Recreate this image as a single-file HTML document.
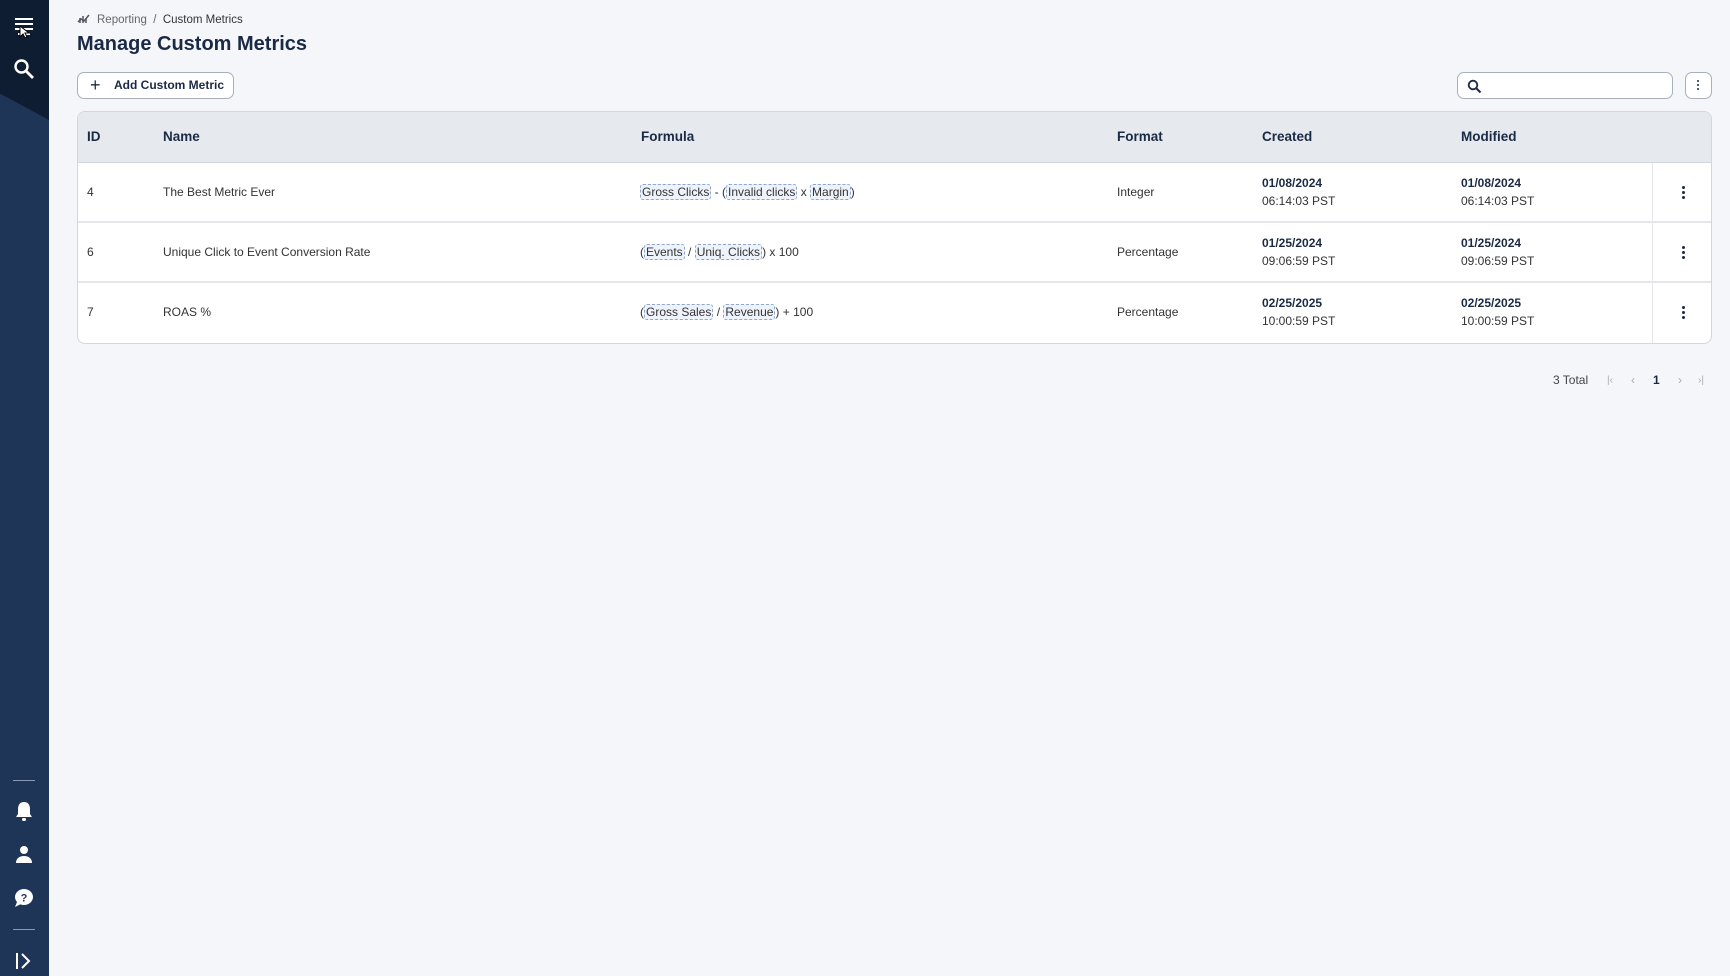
<!DOCTYPE html>
<html><head><meta charset="utf-8"><style>
*{box-sizing:border-box;margin:0;padding:0}
body{width:1730px;height:976px;background:#f5f6fa;font-family:"Liberation Sans",sans-serif;color:#333;position:relative;overflow:hidden}
.sb{position:absolute;left:0;top:0;width:49px;height:976px;background:#1f3558}
.sb .top{position:absolute;left:0;top:0;width:49px;height:120px;background:#0f1d33;clip-path:polygon(0 0,100% 0,100% 100%,0 78%)}
.ic{position:absolute;left:12px}
.a{position:absolute}
.bc{left:77px;top:12px;font-size:11.5px;color:#666}
.bc b{font-weight:normal;color:#333}
h1{position:absolute;left:77px;top:33px;font-size:20px;color:#1b2a44;font-weight:bold}
.btn{left:77px;top:72px;width:157px;height:27px;border:1px solid #a8b0bc;border-radius:7px;background:#fff;font-size:12px;font-weight:bold;color:#1b2a44;line-height:25px;padding-left:36px}
.btn span{position:absolute;left:12px;top:0;font-size:18px;font-weight:normal}
.srch{left:1457px;top:72px;width:216px;height:27px;border:1px solid #a8b0bc;border-radius:7px;background:#fff}
.keb{left:1685px;top:72px;width:27px;height:27px;border:1px solid #a8b0bc;border-radius:7px;background:#fff}
.tbl{left:77px;top:111px;width:1635px;height:233px;border:1px solid #d3d7dd;border-radius:8px;background:#fff;overflow:hidden}
.hd{position:absolute;left:0;top:0;width:100%;height:51px;background:#e6e9ed;border-bottom:1px solid #d3d7dd}
.t{position:absolute;font-size:12px;color:#333;white-space:nowrap}
.h{font-size:13.5px;font-weight:bold;color:#1b2a44}
.row{position:absolute;left:0;width:100%;height:60px;border-bottom:2px solid #e4e6ea}
.dv{position:absolute;left:1574px;top:51px;width:1px;height:182px;background:#e4e6ea}
.chip{border:1px dashed #8fa7cf;background:#eef3fb;border-radius:3px;padding:0 1px}
.bo{font-weight:bold;color:#1b2a44}
.dots{position:absolute;width:3px}
.dots i{display:block;width:3px;height:3px;border-radius:50%;background:#1b2a44;margin-bottom:2px}
.pg{font-size:12px;color:#444;top:373px}
</style></head><body>
<div class="sb"><div class="top"></div>
<svg class="ic" style="top:16px" width="24" height="22" viewBox="0 0 24 22"><path d="M3 3h18M3 8h18M3 13h18M6 18h12" stroke="#fff" stroke-width="2"/><path d="M8 10l0 11 3-3 2 4 2-1-2-4 4 0z" fill="#fff" stroke="#000" stroke-width="1"/></svg>
<svg class="ic" style="top:57px" width="24" height="24" viewBox="0 0 24 24"><circle cx="9.5" cy="9.5" r="6" fill="none" stroke="#fff" stroke-width="2.4"/><path d="M14 14l7 7" stroke="#fff" stroke-width="2.8"/></svg>
<div class="a" style="left:13px;top:780px;width:22px;height:1px;background:#8a9ab3"></div>
<svg class="ic" style="top:801px" width="24" height="22" viewBox="0 0 24 22"><path d="M12 1c-4 0-6 3-6 7v5l-2 3h16l-2-3V8c0-4-2-7-6-7z" fill="#fff"/><rect x="10" y="17" width="4" height="3" rx="1.5" fill="#fff"/></svg>
<svg class="ic" style="top:845px" width="24" height="20" viewBox="0 0 24 20"><circle cx="12" cy="5" r="4" fill="#fff"/><path d="M4 18c0-5 4-7 8-7s8 2 8 7z" fill="#fff"/></svg>
<svg class="ic" style="top:887px" width="24" height="22" viewBox="0 0 24 22"><ellipse cx="12" cy="10" rx="9" ry="8" fill="#fff"/><path d="M5 15l-2 5 6-3z" fill="#fff"/><text x="12" y="14.5" font-size="11" font-weight="bold" text-anchor="middle" fill="#1f3558" font-family="Liberation Sans">?</text></svg>
<div class="a" style="left:13px;top:929px;width:22px;height:1px;background:#8a9ab3"></div>
<svg class="ic" style="top:951px" width="24" height="20" viewBox="0 0 24 20"><path d="M5 2v16" stroke="#fff" stroke-width="2"/><path d="M10 3l7 7-7 7" fill="none" stroke="#fff" stroke-width="2"/></svg>
</div>
<div class="a bc"><svg width="14" height="12" viewBox="0 0 14 12" style="vertical-align:-1px;margin-right:6px"><path d="M1 10l3-3 3 2 5-6" fill="none" stroke="#556" stroke-width="1.5"/><path d="M3 11V6M6 11V4M9 11V6" stroke="#556" stroke-width="1.5"/></svg>Reporting&nbsp; / &nbsp;<b>Custom Metrics</b></div>
<h1>Manage Custom Metrics</h1>
<div class="a btn"><span>+</span>Add Custom Metric</div>
<div class="a srch"><svg style="position:absolute;left:9px;top:6px" width="15" height="15" viewBox="0 0 15 15"><circle cx="6" cy="6" r="4.3" fill="none" stroke="#1b2a44" stroke-width="1.8"/><path d="M9 9l4.5 4.5" stroke="#1b2a44" stroke-width="2"/></svg></div>
<div class="a keb"><div class="dots" style="left:11px;top:7px"><i style="width:2px;height:2px"></i><i style="width:2px;height:2px"></i><i style="width:2px;height:2px"></i></div></div>
<div class="a tbl">
<div class="hd"></div>
<div class="t h" style="left:9px;top:17px">ID</div>
<div class="t h" style="left:85px;top:17px">Name</div>
<div class="t h" style="left:563px;top:17px">Formula</div>
<div class="t h" style="left:1039px;top:17px">Format</div>
<div class="t h" style="left:1184px;top:17px">Created</div>
<div class="t h" style="left:1383px;top:17px">Modified</div>
<div class="row" style="top:51px"></div>
<div class="row" style="top:111px"></div>
<div class="row" style="top:171px;border-bottom:none"></div>
<div class="dv"></div>

<div class="t" style="left:9px;top:73px">4</div>
<div class="t" style="left:85px;top:73px">The Best Metric Ever</div>
<div class="t" style="left:562px;top:73px"><span class="chip">Gross Clicks</span> - (<span class="chip">Invalid clicks</span> x <span class="chip">Margin</span>)</div>
<div class="t" style="left:1039px;top:73px">Integer</div>
<div class="t bo" style="left:1184px;top:64px">01/08/2024</div><div class="t" style="left:1184px;top:82px">06:14:03 PST</div>
<div class="t bo" style="left:1383px;top:64px">01/08/2024</div><div class="t" style="left:1383px;top:82px">06:14:03 PST</div>
<div class="dots" style="left:1604px;top:74px"><i></i><i></i><i></i></div>

<div class="t" style="left:9px;top:133px">6</div>
<div class="t" style="left:85px;top:133px">Unique Click to Event Conversion Rate</div>
<div class="t" style="left:562px;top:133px">(<span class="chip">Events</span> / <span class="chip">Uniq. Clicks</span>) x 100</div>
<div class="t" style="left:1039px;top:133px">Percentage</div>
<div class="t bo" style="left:1184px;top:124px">01/25/2024</div><div class="t" style="left:1184px;top:142px">09:06:59 PST</div>
<div class="t bo" style="left:1383px;top:124px">01/25/2024</div><div class="t" style="left:1383px;top:142px">09:06:59 PST</div>
<div class="dots" style="left:1604px;top:134px"><i></i><i></i><i></i></div>

<div class="t" style="left:9px;top:193px">7</div>
<div class="t" style="left:85px;top:193px">ROAS %</div>
<div class="t" style="left:562px;top:193px">(<span class="chip">Gross Sales</span> / <span class="chip">Revenue</span>) + 100</div>
<div class="t" style="left:1039px;top:193px">Percentage</div>
<div class="t bo" style="left:1184px;top:184px">02/25/2025</div><div class="t" style="left:1184px;top:202px">10:00:59 PST</div>
<div class="t bo" style="left:1383px;top:184px">02/25/2025</div><div class="t" style="left:1383px;top:202px">10:00:59 PST</div>
<div class="dots" style="left:1604px;top:194px"><i></i><i></i><i></i></div>
</div>
<div class="a pg" style="left:1553px">3 Total</div>
<div class="a pg" style="left:1607px;color:#aaa;font-size:10px;top:375px">|‹</div>
<div class="a pg" style="left:1631px;color:#aaa;top:373px">‹</div>
<div class="a pg" style="left:1653px;font-weight:bold;color:#1b2a44">1</div>
<div class="a pg" style="left:1678px;color:#aaa">›</div>
<div class="a pg" style="left:1698px;color:#aaa;font-size:10px;top:375px">›|</div>
</body></html>
